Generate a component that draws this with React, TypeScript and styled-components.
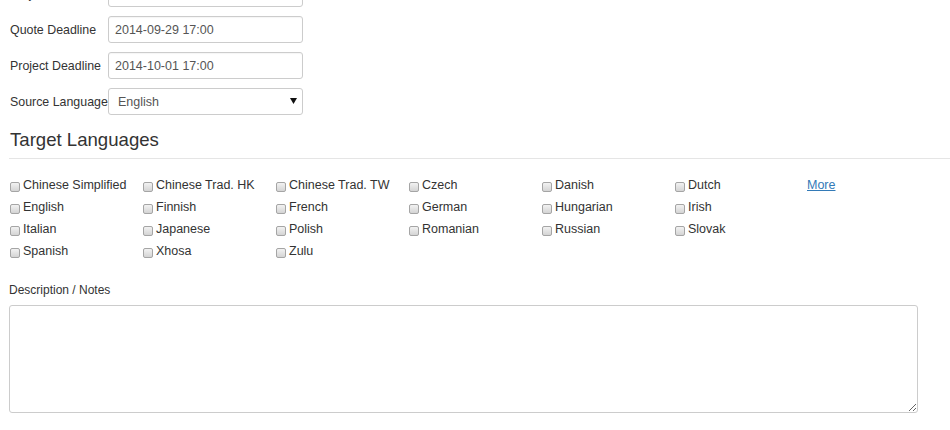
import * as React from 'react';
import styled, { createGlobalStyle } from 'styled-components';

const GlobalStyle = createGlobalStyle`
  html, body {
    margin: 0;
    padding: 0;
    background: #fff;
    overflow: hidden;
  }
  body {
    font-family: 'Liberation Sans', Arial, sans-serif;
    font-size: 12.5px;
    color: #333;
  }
`;

const Page = styled.div`
  width: 950px;
  height: 430px;
  overflow: hidden;
  padding-left: 9px;
  box-sizing: border-box;
`;

const Fields = styled.div`
  margin-top: -20px;
  display: flex;
  flex-direction: column;
  gap: 9px;
`;

const FieldRow = styled.div`
  display: flex;
  align-items: center;
  height: 27px;
`;

const FieldLabel = styled.label`
  width: 99px;
  padding-left: 1px;
  box-sizing: border-box;
  white-space: nowrap;
  font-size: 12.4px;
  color: #333;
`;

const TextInput = styled.input`
  width: 195px;
  height: 27px;
  box-sizing: border-box;
  border: 1px solid #ccc;
  border-radius: 3px;
  padding: 0 6px;
  font-family: 'Liberation Sans', Arial, sans-serif;
  font-size: 12.5px;
  color: #555;
  outline: none;
  box-shadow: inset 0 1px 1px rgba(0, 0, 0, 0.04);
`;

const SelectWrap = styled.div`
  position: relative;
  width: 195px;
  height: 27px;
`;

const Select = styled.select`
  appearance: none;
  width: 100%;
  height: 100%;
  border: 1px solid #ccc;
  border-radius: 3px;
  padding: 0 9px;
  background: #fff;
  font-family: 'Liberation Sans', Arial, sans-serif;
  font-size: 12.5px;
  color: #555;
  outline: none;
`;

const Caret = styled.svg`
  position: absolute;
  right: 6px;
  top: 10px;
  pointer-events: none;
`;

const SectionTitle = styled.h3`
  margin: 15px 0 0;
  font-size: 18.6px;
  font-weight: normal;
  color: #333;
  line-height: 20px;
  padding-left: 1px;
`;

const Rule = styled.hr`
  border: 0;
  border-top: 1px solid #e5e5e5;
  margin: 8px 0 15px;
`;

const LangGrid = styled.div`
  display: grid;
  grid-template-columns: repeat(7, 133px);
  grid-auto-rows: 22px;
`;

const LangItem = styled.label`
  display: flex;
  align-items: center;
  gap: 3px;
  font-size: 12.5px;
  color: #333;
  white-space: nowrap;
`;

const Box = styled.input.attrs({ type: 'checkbox' })`
  appearance: none;
  margin: 3px 0 0 1px;
  width: 10px;
  height: 10px;
  border: 1px solid #a5a5a5;
  border-radius: 2px;
  background: linear-gradient(#f2f2f2, #d4d4d4);
  flex-shrink: 0;
`;

const MoreLink = styled.a`
  color: #337ab7;
  text-decoration: underline;
  font-size: 12.5px;
  display: flex;
  align-items: center;
`;

const NotesLabel = styled.div`
  margin-top: 21px;
  font-size: 12px;
  color: #333;
  line-height: 14px;
`;

const Notes = styled.textarea`
  display: block;
  margin-top: 8px;
  width: 909px;
  height: 108px;
  box-sizing: border-box;
  border: 1px solid #ccc;
  border-radius: 3px;
  resize: vertical;
  outline: none;
`;

const languages = [
  'Chinese Simplified', 'Chinese Trad. HK', 'Chinese Trad. TW', 'Czech', 'Danish', 'Dutch', null,
  'English', 'Finnish', 'French', 'German', 'Hungarian', 'Irish', '',
  'Italian', 'Japanese', 'Polish', 'Romanian', 'Russian', 'Slovak', '',
  'Spanish', 'Xhosa', 'Zulu',
];

export default function App() {
  return (
    <Page>
      <GlobalStyle />
      <Fields>
        <FieldRow>
          <FieldLabel>Project Name</FieldLabel>
          <TextInput defaultValue="" />
        </FieldRow>
        <FieldRow>
          <FieldLabel>Quote Deadline</FieldLabel>
          <TextInput defaultValue="2014-09-29 17:00" />
        </FieldRow>
        <FieldRow>
          <FieldLabel>Project Deadline</FieldLabel>
          <TextInput defaultValue="2014-10-01 17:00" />
        </FieldRow>
        <FieldRow>
          <FieldLabel>Source Language</FieldLabel>
          <SelectWrap>
            <Select defaultValue="English">
              <option>English</option>
            </Select>
            <Caret width="7" height="6" viewBox="0 0 7 6">
              <path d="M0 0 L7 0 L3.5 6 Z" fill="#111" />
            </Caret>
          </SelectWrap>
        </FieldRow>
      </Fields>

      <SectionTitle>Target Languages</SectionTitle>
      <Rule />

      <LangGrid>
        {languages.map((lang, i) =>
          lang === null ? (
            <MoreLink key={i} href="#">More</MoreLink>
          ) : lang === '' ? (
            <span key={i} />
          ) : (
            <LangItem key={i}>
              <Box />
              {lang}
            </LangItem>
          )
        )}
      </LangGrid>

      <NotesLabel>Description / Notes</NotesLabel>
      <Notes />
    </Page>
  );
}
